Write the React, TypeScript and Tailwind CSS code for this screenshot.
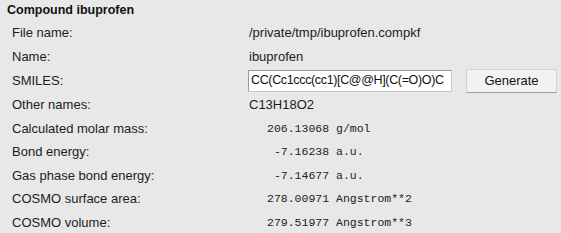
const ROWS: { label: string; value: string; mono?: boolean }[] = [
  { label: 'File name:', value: '/private/tmp/ibuprofen.compkf' },
  { label: 'Name:', value: 'ibuprofen' },
];

const ROWS2: { label: string; value: string; mono?: boolean }[] = [
  { label: 'Other names:', value: 'C13H18O2' },
  { label: 'Calculated molar mass:', value: '206.13068 g/mol', mono: true },
  { label: 'Bond energy:', value: ' -7.16238 a.u.', mono: true },
  { label: 'Gas phase bond energy:', value: ' -7.14677 a.u.', mono: true },
  { label: 'COSMO surface area:', value: '278.00971 Angstrom**2', mono: true },
  { label: 'COSMO volume:', value: '279.51977 Angstrom**3', mono: true },
];

function Row({ label, value, mono }: { label: string; value: string; mono?: boolean }) {
  return (
    <div className="flex items-center h-[23.5px]">
      <div className="w-[249px] shrink-0 pl-[12px]">{label}</div>
      {mono ? (
        <div className="pl-[18px] whitespace-pre text-[11.5px] text-[#222]" style={{ fontFamily: '"Liberation Mono", monospace' }}>
          {value}
        </div>
      ) : (
        <div>{value}</div>
      )}
    </div>
  );
}

export default function App() {
  return (
    <div
      className="w-[561px] h-[233px] bg-[#e8e8e8] text-[13px] text-[#1c1c1c] overflow-hidden"
      style={{ fontFamily: '"Liberation Sans", Arial, sans-serif' }}
    >
      {/* Header */}
      <div className="h-[21px] flex items-center pl-[7px] font-bold text-[12.5px] text-[#111]">Compound ibuprofen</div>

      {ROWS.map(r => <Row key={r.label} {...r} />)}

      {/* SMILES row */}
      <div className="flex items-center h-[25px]">
        <div className="w-[248px] shrink-0 pl-[12px]">SMILES:</div>
        <div className="w-[204px] h-[22px] bg-white border border-[#9a9a9a] border-b-[#c8c8c8] border-r-[#c8c8c8] flex items-center pl-[2px] whitespace-nowrap text-[12.5px] tracking-[-0.35px] text-[#111]">
          CC(Cc1ccc(cc1)[C@@H](C(=O)O)C
        </div>
        <button className="ml-[14px] w-[91px] h-[24px] bg-[#f2f2f2] border border-[#d4d4d4] border-b-[#9c9c9c] flex items-center justify-center text-[#111]">
          Generate
        </button>
      </div>

      {ROWS2.map(r => <Row key={r.label} {...r} />)}
    </div>
  );
}
